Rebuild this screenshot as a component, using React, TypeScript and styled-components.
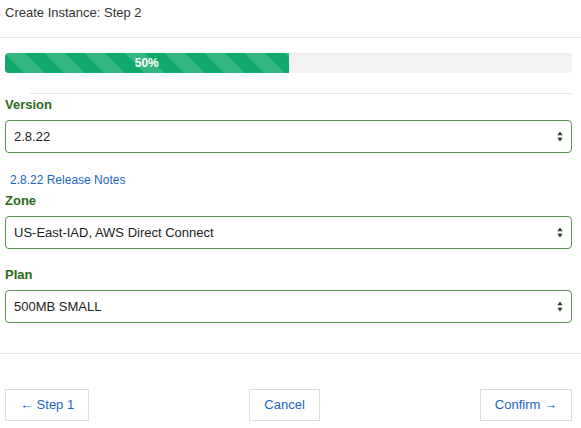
import React from "react";
import styled, { createGlobalStyle } from "styled-components";

const GlobalStyle = createGlobalStyle`
  html, body {
    margin: 0;
    padding: 0;
    background: #ffffff;
  }
  body {
    font-family: "Liberation Sans", Arial, Helvetica, sans-serif;
    color: #333333;
    -webkit-font-smoothing: antialiased;
  }
  * { box-sizing: border-box; }
`;

const Page = styled.div`
  width: 581px;
  display: flex;
  flex-direction: column;
`;

const Header = styled.header`
  height: 38px;
  padding: 4px 5px 0;
  border-bottom: 1px solid #e5e5e5;
`;

const Title = styled.h4`
  margin: 0;
  font-size: 13px;
  line-height: 18px;
  font-weight: normal;
  color: #333333;
`;

const Body = styled.section`
  padding: 15px 9px 0 5px;
  display: flex;
  flex-direction: column;
`;

const Progress = styled.div`
  height: 20px;
  border-radius: 4px;
  background: #f3f3f3;
  box-shadow: inset 0 1px 2px rgba(0, 0, 0, 0.06);
  overflow: hidden;
  display: flex;
`;

const ProgressBar = styled.div`
  height: 100%;
  background-color: #10a96b;
  background-image: linear-gradient(
    45deg,
    rgba(255, 255, 255, 0.15) 25%,
    transparent 25%,
    transparent 50%,
    rgba(255, 255, 255, 0.15) 50%,
    rgba(255, 255, 255, 0.15) 75%,
    transparent 75%,
    transparent
  );
  background-size: 40px 40px;
  color: #ffffff;
  font-size: 12px;
  font-weight: bold;
  line-height: 20px;
  text-align: center;
`;

const Rule = styled.hr`
  margin: 20px 0 0 25px;
  border: 0;
  border-top: 1px solid #e5e5e5;
  height: 0;
`;

const Label = styled.label<{ $top: number }>`
  display: block;
  margin-top: ${(p) => p.$top}px;
  margin-bottom: 6px;
  font-size: 13px;
  line-height: 18px;
  font-weight: bold;
  color: #2b6c1a;
`;

const SelectWrap = styled.div`
  position: relative;
  height: 33px;
`;

const Select = styled.select`
  appearance: none;
  -webkit-appearance: none;
  width: 100%;
  height: 33px;
  margin: 0;
  padding: 0 28px 0 8px;
  border: 1px solid #5b9153;
  border-radius: 4px;
  background: #ffffff;
  font-family: "Liberation Sans", Arial, Helvetica, sans-serif;
  font-size: 13px;
  color: #222222;
  outline: none;
`;

const Arrow = styled.svg`
  position: absolute;
  right: 9px;
  top: 11px;
  width: 6px;
  height: 11px;
  pointer-events: none;
`;

const HelpLink = styled.a`
  display: block;
  margin: 19px 0 0 5px;
  font-size: 12px;
  line-height: 17px;
  color: #1a66c2;
  text-decoration: none;
`;

const FooterRule = styled.div`
  margin-top: 30px;
  border-top: 1px solid #e5e5e5;
`;

const Footer = styled.footer`
  padding: 35px 9px 0 5px;
  display: flex;
  justify-content: space-between;
`;

const Button = styled.button`
  height: 32px;
  padding: 0 14px;
  border: 1px solid #dddddd;
  border-radius: 0;
  background: #ffffff;
  font-family: "Liberation Sans", Arial, Helvetica, sans-serif;
  font-size: 13px;
  line-height: 30px;
  color: #1a66c2;
  cursor: pointer;
`;

type FieldProps = {
  label: string;
  value: string;
  top: number;
};

const SelectArrow = () => (
  <Arrow viewBox="0 0 6 11">
    <path d="M3 0.5 L5.6 4.2 L0.4 4.2 Z" fill="#333" />
    <path d="M3 10.5 L5.6 6.8 L0.4 6.8 Z" fill="#333" />
  </Arrow>
);

const Field = ({ label, value, top }: FieldProps) => (
  <>
    <Label $top={top}>{label}</Label>
    <SelectWrap>
      <Select defaultValue={value}>
        <option value={value}>{value}</option>
      </Select>
      <SelectArrow />
    </SelectWrap>
  </>
);

export default function App() {
  return (
    <Page>
      <GlobalStyle />
      <Header>
        <Title>Create Instance: Step 2</Title>
      </Header>
      <Body>
        <Progress>
          <ProgressBar style={{ width: "50%" }}>50%</ProgressBar>
        </Progress>
        <Rule />
        <Field label="Version" value="2.8.22" top={2} />
        <HelpLink href="#">2.8.22 Release Notes</HelpLink>
        <Field label="Zone" value="US-East-IAD, AWS Direct Connect" top={3} />
        <Field label="Plan" value="500MB SMALL" top={17} />
      </Body>
      <FooterRule />
      <Footer>
        <Button>← Step 1</Button>
        <Button>Cancel</Button>
        <Button>Confirm →</Button>
      </Footer>
    </Page>
  );
}
